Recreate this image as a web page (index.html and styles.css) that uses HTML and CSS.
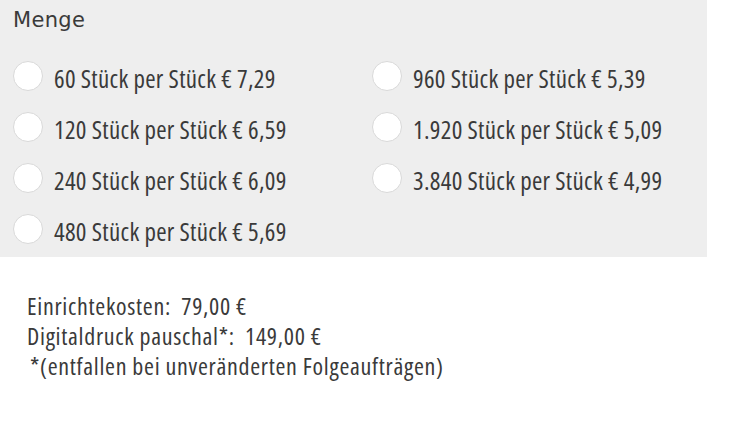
FILE: index.html
```html
<!DOCTYPE html>
<html lang="de">
<head>
<meta charset="utf-8">
<link rel="stylesheet" href="styles.css">
</head>
<body>
<section class="panel">
  <div class="title">Menge</div>
  <div class="options">
    <label class="opt"><span class="radio"></span><span class="txt">60 Stück per Stück € 7,29</span></label>
    <label class="opt"><span class="radio"></span><span class="txt">960 Stück per Stück € 5,39</span></label>
    <label class="opt"><span class="radio"></span><span class="txt">120 Stück per Stück € 6,59</span></label>
    <label class="opt"><span class="radio"></span><span class="txt">1.920 Stück per Stück € 5,09</span></label>
    <label class="opt"><span class="radio"></span><span class="txt">240 Stück per Stück € 6,09</span></label>
    <label class="opt"><span class="radio"></span><span class="txt">3.840 Stück per Stück € 4,99</span></label>
    <label class="opt"><span class="radio"></span><span class="txt">480 Stück per Stück € 5,69</span></label>
  </div>
</section>
<section class="costs">
  <div class="line">Einrichtekosten:&nbsp; 79,00 €</div>
  <div class="line">Digitaldruck pauschal*:&nbsp; 149,00 €</div>
  <div class="line note">*(entfallen bei unveränderten Folgeaufträgen)</div>
</section>
</body>
</html>
```
FILE: styles.css
```css
html, body { margin: 0; padding: 0; background: #fff; }
body {
  color: #3a3a3a;
  font-family: "Open Sans", "Noto Sans", sans-serif;
}
.panel {
  width: 707px;
  height: 257px;
  box-sizing: border-box;
  background: #eeeeee;
  padding: 7px 0 0 13px;
}
.title {
  font-family: "DejaVu Sans", sans-serif;
  font-size: 21px;
  letter-spacing: 0.3px;
  line-height: 26px;
  margin-bottom: 17px;
}
.options {
  display: grid;
  grid-template-columns: 359px auto;
  grid-auto-rows: 51px;
  align-items: center;
}
.opt {
  display: flex;
  align-items: center;
  gap: 11px;
}
.radio {
  width: 28px;
  height: 28px;
  border-radius: 50%;
  background: #fff;
  border: 1px solid #d9d9d9;
  flex: none;
}
.txt {
  font-size: 25px;
  font-stretch: 75%;
  letter-spacing: 0.3px;
  line-height: 30px;
  padding-top: 5px;
}
.costs {
  padding: 34px 0 0 27px;
}
.line {
  font-size: 24px;
  font-stretch: 75%;
  letter-spacing: 0.7px;
  line-height: 30px;
}
.note { padding-left: 3px; }
```
